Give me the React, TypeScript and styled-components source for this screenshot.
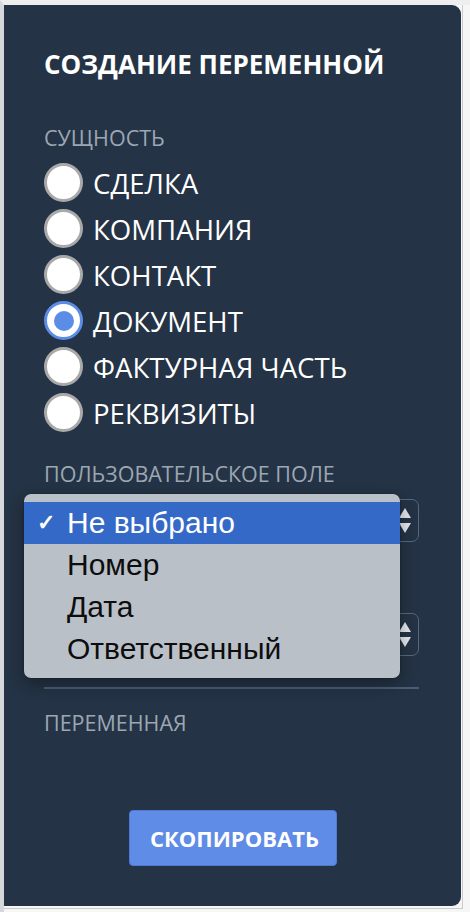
import React from "react";
import styled, { createGlobalStyle } from "styled-components";

const Global = createGlobalStyle`
  html, body { margin: 0; padding: 0; background: #f5f5f5; }
  #root { width: 470px; height: 912px; }
  * { box-sizing: border-box; }
`;

const Page = styled.div`
  width: 470px;
  height: 912px;
  border-left: 4px solid #d6d9dc;
  border-top: 5px solid #eeeeee;
  background: #f6f6f6;
`;

const Frame = styled.div`
  width: 459px;
  height: 904px;
  border-right: 1px solid #cbcbcb;
  border-bottom: 1px solid #cbcbcb;
`;

const Panel = styled.div`
  position: relative;
  width: 457px;
  height: 901px;
  background: #243345;
  border-radius: 0 9px 9px 0;
  padding: 42px 42px 0 40px;
  display: flex;
  flex-direction: column;
  font-family: "Open Sans", "Noto Sans", sans-serif;
`;

const Title = styled.h1`
  margin: 0;
  font-size: 26px;
  line-height: 34px;
  font-weight: 700;
  color: #ffffff;
`;

const Label = styled.div<{ $top: number }>`
  margin-top: ${(p) => p.$top}px;
  font-size: 21.5px;
  line-height: 28px;
  font-weight: 400;
  color: #9ca7b3;
`;

const RadioList = styled.div`
  display: flex;
  flex-direction: column;
  gap: 7px;
  margin-top: 11px;
`;

const RadioRow = styled.label`
  display: flex;
  align-items: center;
  gap: 10px;
  height: 39px;
  font-size: 27.6px;
  color: #ffffff;
`;

const Circle = styled.span<{ $checked?: boolean }>`
  flex: none;
  width: 39px;
  height: 39px;
  border-radius: 50%;
  background: #ffffff;
  border: 3px solid ${(p) => (p.$checked ? "#5b8de6" : "#a9a9a9")};
  display: flex;
  align-items: center;
  justify-content: center;
  &::after {
    content: "";
    display: ${(p) => (p.$checked ? "block" : "none")};
    width: 20px;
    height: 20px;
    border-radius: 50%;
    background: #5b8de6;
  }
`;

const RadioText = styled.span`
  line-height: 39px;
  padding-top: 2px;
`;

const SelectBox = styled.div<{ $top: number }>`
  position: relative;
  margin-top: ${(p) => p.$top}px;
  height: 43px;
  border: 1.5px solid #56687f;
  border-radius: 7px;
  display: flex;
  align-items: center;
  padding-left: 12px;
  font-size: 20px;
  color: #ffffff;
`;

const Arrows = styled.svg`
  position: absolute;
  right: 7px;
  top: 50%;
  transform: translateY(-50%);
`;

const Divider = styled.hr`
  margin: 31px 0 0;
  border: none;
  height: 2px;
  background: #4b5e76;
`;

const ButtonRow = styled.div`
  display: flex;
  justify-content: center;
  margin-top: 73px;
  margin-right: -2px;
`;

const CopyButton = styled.button`
  width: 208px;
  height: 56px;
  border: 1px solid #4f7ad0;
  border-radius: 4px;
  background: #5f8ce6;
  color: #ffffff;
  font-family: "Open Sans", "Noto Sans", sans-serif;
  font-size: 22px;
  font-weight: 700;
  padding: 0 0 0 4px;
`;

const Popup = styled.div`
  position: absolute;
  left: 20px;
  top: 489px;
  width: 376px;
  height: 184px;
  padding: 8px 0;
  background: #b9c0c8;
  border-radius: 7px;
  box-shadow: 0 6px 16px rgba(0, 0, 0, 0.35), 0 0 0 0.5px rgba(0, 0, 0, 0.2);
  font-family: "Liberation Sans", Arial, sans-serif;
`;

const Option = styled.div<{ $active?: boolean }>`
  position: relative;
  height: 42px;
  display: flex;
  align-items: center;
  padding-left: 43px;
  font-size: 30px;
  color: ${(p) => (p.$active ? "#ffffff" : "#0d0d0d")};
  background: ${(p) => (p.$active ? "#3569c8" : "transparent")};
`;

const Check = styled.span`
  position: absolute;
  left: 13px;
  top: 50%;
  transform: translateY(-50%);
  font-size: 22px;
  font-weight: 700;
`;

const ArrowIcon = () => (
  <Arrows width="12" height="26" viewBox="0 0 12 26">
    <path d="M6 0 L12 10 L0 10 Z" fill="#e3e7ec" />
    <path d="M0 15 L12 15 L6 25 Z" fill="#e3e7ec" />
  </Arrows>
);

const entities = [
  { name: "СДЕЛКА" },
  { name: "КОМПАНИЯ" },
  { name: "КОНТАКТ" },
  { name: "ДОКУМЕНТ", checked: true },
  { name: "ФАКТУРНАЯ ЧАСТЬ" },
  { name: "РЕКВИЗИТЫ" },
];

const options = ["Не выбрано", "Номер", "Дата", "Ответственный"];

export default function App() {
  return (
    <>
      <Global />
      <Page>
        <Frame>
          <Panel>
            <Title>СОЗДАНИЕ ПЕРЕМЕННОЙ</Title>
            <Label $top={43}>СУЩНОСТЬ</Label>
            <RadioList>
              {entities.map((e) => (
                <RadioRow key={e.name}>
                  <Circle $checked={e.checked} />
                  <RadioText>{e.name}</RadioText>
                </RadioRow>
              ))}
            </RadioList>
            <Label $top={28}>ПОЛЬЗОВАТЕЛЬСКОЕ ПОЛЕ</Label>
            <SelectBox $top={11}>
              <ArrowIcon />
            </SelectBox>
            <SelectBox $top={71}>
              <ArrowIcon />
            </SelectBox>
            <Divider />
            <Label $top={20}>ПЕРЕМЕННАЯ</Label>
            <ButtonRow>
              <CopyButton>СКОПИРОВАТЬ</CopyButton>
            </ButtonRow>
            <Popup>
              {options.map((o, i) => (
                <Option key={o} $active={i === 0}>
                  {i === 0 && <Check>✓</Check>}
                  {o}
                </Option>
              ))}
            </Popup>
          </Panel>
        </Frame>
      </Page>
    </>
  );
}
